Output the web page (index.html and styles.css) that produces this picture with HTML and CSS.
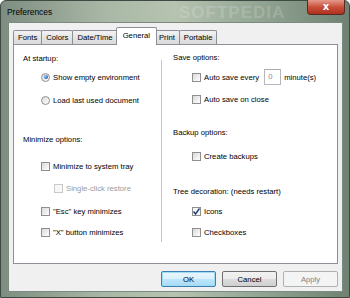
FILE: index.html
```html
<!DOCTYPE html>
<html lang="en">

<head>
    <meta charset="UTF-8">
    <title>Preferences</title>
    <link rel="stylesheet" href="styles.css">
</head>

<body>
    <div class="window">
        <div class="titlebar">
            <span class="title">Preferences</span>
            <span class="watermark">SOFTPEDIA</span>
            <button class="close">x</button>
        </div>
        <div class="client">
            <div class="tabs">
                <div class="tab">Fonts</div>
                <div class="tab">Colors</div>
                <div class="tab">Date/Time</div>
                <div class="tab active">General</div>
                <div class="tab">Print</div>
                <div class="tab">Portable</div>
            </div>
            <div class="panel">
                <div class="col left">
                    <div class="row label first">At startup:</div>
                    <div class="row opt ind m5"><span class="radio on"></span>Show empty environment</div>
                    <div class="row opt ind m9"><span class="radio"></span>Load last used document</div>
                    <div class="row label m25">Minimize options:</div>
                    <div class="row opt ind m13"><span class="check"></span>Minimize to system tray</div>
                    <div class="row opt sub m8 disabled"><span class="check"></span>Single-click restore</div>
                    <div class="row opt ind m9"><span class="check"></span>"Esc" key minimizes</div>
                    <div class="row opt ind m7"><span class="check"></span>"X" button minimizes</div>
                </div>
                <div class="divider"></div>
                <div class="col right">
                    <div class="row label first">Save options:</div>
                    <div class="row opt ind m6"><span class="check"></span>Auto save every <span class="num">0</span> minute(s)</div>
                    <div class="row opt ind m8"><span class="check"></span>Auto save on close</div>
                    <div class="row label m19">Backup options:</div>
                    <div class="row opt ind m10"><span class="check"></span>Create backups</div>
                    <div class="row label m21">Tree decoration: (needs restart)</div>
                    <div class="row opt ind m6"><span class="check on">
                        <svg width="9" height="9" viewBox="0 0 9 9"><path d="M1.5 4.5 L3.5 7 L7.5 1.5" fill="none" stroke="#21407a" stroke-width="1.4"/></svg>
                    </span>Icons</div>
                    <div class="row opt ind m7"><span class="check"></span>Checkboxes</div>
                </div>
            </div>
            <div class="actions">
                <button class="btn default">OK</button>
                <button class="btn">Cancel</button>
                <button class="btn" disabled>Apply</button>
            </div>
        </div>
    </div>
</body>

</html>
```

FILE: styles.css
```css
body {
    margin: 0;
    padding: 0;
    font-family: 'Liberation Sans', Arial, sans-serif;
    font-size: 7.7px;
    color: #000;
}

.window {
    width: 350px;
    height: 298px;
    box-sizing: border-box;
    display: flex;
    flex-direction: column;
    border: 1px solid #3e4a42;
    border-radius: 6px 6px 0 0;
    background: linear-gradient(90deg, #7d8d80 0%, #a9b8a6 30%, #b7c3b1 50%, #98aa98 70%, #6f8172 100%);
}

.titlebar {
    height: 21px;
    display: flex;
    align-items: flex-start;
    padding-left: 6px;
    position: relative;
}

.title {
    margin-top: 6px;
    font-size: 8.4px;
}

.watermark {
    position: absolute;
    left: 178px;
    top: 2px;
    font-size: 17px;
    font-weight: bold;
    letter-spacing: 1px;
    color: rgba(255, 255, 255, 0.18);
}

.close {
    margin-left: auto;
    margin-right: 4px;
    width: 38px;
    height: 15px;
    margin-top: -1px;
    border: 1px solid #5a2a24;
    border-top: none;
    border-radius: 0 0 4px 4px;
    background: linear-gradient(#e69a8c, #c8503b 50%, #b0301d);
    color: white;
    font-family: 'DejaVu Sans', sans-serif;
    font-weight: bold;
    font-size: 10px;
    line-height: 12px;
    padding: 0;
}

.client {
    flex: 1;
    margin: 0 6px 5px 7px;
    background: #f0f0f0;
    border: 1px solid #7c8a80;
    display: flex;
    flex-direction: column;
}

.tabs {
    display: flex;
    align-items: flex-end;
    height: 22px;
    padding-left: 4px;
}

.tab {
    height: 14px;
    line-height: 14px;
    padding: 0 4px;
    margin-left: -1px;
    border: 1px solid #8c8f96;
    border-bottom: none;
    background: linear-gradient(#f3f3f3, #e3e3e3 50%, #d9d9d9);
    border-radius: 2px 2px 0 0;
}

.tab:first-child {
    margin-left: 0;
}

.tab.active {
    height: 17px;
    line-height: 15px;
    background: white;
    margin: 0 -2px 0 -2px;
    padding: 0 6px;
    position: relative;
    z-index: 1;
}

.panel {
    margin: -1px 4px 0 4px;
    height: 220px;
    box-sizing: border-box;
    border: 1px solid #8c8f96;
    background: white;
    display: flex;
}

.col {
    display: flex;
    flex-direction: column;
}

.left {
    width: 147px;
    padding-left: 9px;
    box-sizing: border-box;
}

.right {
    flex: 1;
    padding-left: 10px;
}

.divider {
    margin-top: 15px;
    height: 182px;
    width: 1px;
    background: #c4c4c4;
    border-right: 1px solid #fff;
}

.row {
    height: 14px;
    display: flex;
    align-items: center;
    white-space: nowrap;
}

.row.first {
    margin-top: 6px;
}

.right .row.first {
    margin-top: 5px;
}

.ind {
    padding-left: 18px;
}

.right .ind {
    padding-left: 19px;
}

.sub {
    padding-left: 31px;
}

.m5 { margin-top: 5px; }
.m6 { margin-top: 6px; }
.m7 { margin-top: 7px; }
.m8 { margin-top: 8px; }
.m9 { margin-top: 9px; }
.m10 { margin-top: 10px; }
.m13 { margin-top: 13px; }
.m19 { margin-top: 19px; }
.m21 { margin-top: 21px; }
.m25 { margin-top: 25px; }

.check,
.radio {
    width: 9px;
    height: 9px;
    box-sizing: border-box;
    border: 1px solid #8f8f8f;
    background: linear-gradient(135deg, #d9d9d9, #f4f4f4 70%, #fff);
    margin-right: 3px;
    flex: none;
    position: relative;
}

.check svg {
    position: absolute;
    left: -1px;
    top: -1px;
}

.check.on {
    background: #f6f6f6;
}

.radio {
    border-radius: 50%;
}

.radio.on::after {
    content: '';
    position: absolute;
    left: 1.5px;
    top: 1.5px;
    width: 4px;
    height: 4px;
    border-radius: 50%;
    background: radial-gradient(circle at 35% 35%, #9fd0ff, #1d5fb8 70%);
}

.disabled {
    color: #9b9b9b;
}

.disabled .check {
    border-color: #c9c9c9;
    background: #f7f7f7;
}

.num {
    width: 17px;
    height: 16px;
    box-sizing: border-box;
    border: 1px solid #b5b8bf;
    border-top-color: #a8abb2;
    color: #8a8a8a;
    padding-left: 3px;
    line-height: 14px;
    margin: 0 3px 0 5px;
}

.actions {
    display: flex;
    justify-content: flex-end;
    gap: 6px;
    margin: 7px 4px 0 0;
}

.btn {
    width: 55px;
    height: 16px;
    padding: 0;
    font-family: 'Liberation Sans', Arial, sans-serif;
    font-size: 7.7px;
    color: #000;
    border: 1px solid #707070;
    border-radius: 2px;
    background: linear-gradient(#f2f2f2, #ebebeb 50%, #dddddd 51%, #cfcfcf);
}

.btn.default {
    border-color: #3c7fb1;
    box-shadow: inset 0 0 0 1px #9fdcf5;
    background: linear-gradient(#eaf6fd, #d9f0fc 50%, #bee6fd 51%, #a7d9f5);
}

.btn:disabled {
    border-color: #adb2b5;
    background: #f4f4f4;
    color: #838383;
}
```
